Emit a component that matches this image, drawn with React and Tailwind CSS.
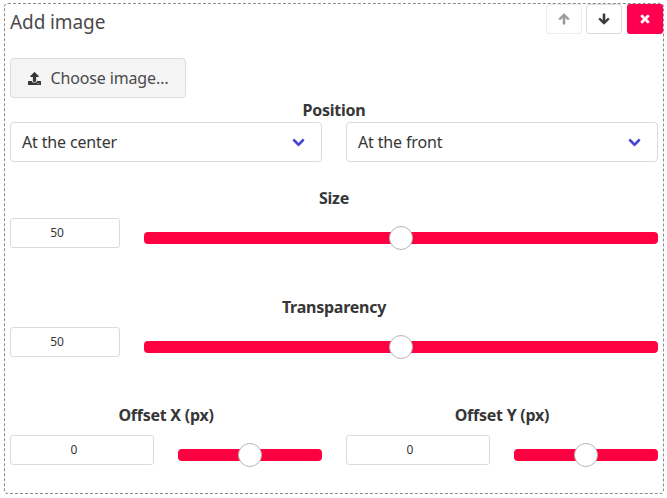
import React from "react";
import { FaArrowDown, FaArrowUp, FaChevronDown, FaTimes, FaUpload } from "react-icons/fa";

const Select = ({ value }) => (
  <div className="flex h-10 flex-1 items-center justify-between rounded-[4px] border border-[#dbdbdb] bg-white pl-[11px] pr-4 text-base tracking-[-0.15px] text-[#363636]">
    <span>{value}</span>
    <FaChevronDown className="text-[13px] text-[#3f3fd8] [stroke-width:30px] stroke-[#3f3fd8]" />
  </div>
);

const Slider = ({ className }) => (
  <div className={`relative h-3 rounded-[4px] bg-[#ff0040] ${className}`}>
    <div className="absolute left-1/2 top-1/2 size-6 -translate-x-1/2 -translate-y-1/2 rounded-full border border-[#b5b5b5] bg-white" />
  </div>
);

const NumberInput = ({ value, className }) => (
  <div className={`flex h-[30px] items-center justify-center rounded-[3px] border border-[#dbdbdb] bg-white pr-4 text-xs text-[#363636] ${className}`}>
    {value}
  </div>
);

const Label = ({ children, className }) => (
  <div className={`text-center text-base font-bold leading-6 tracking-[-0.25px] text-[#363636] ${className}`}>{children}</div>
);

const Offset = ({ label }) => (
  <div className="flex-1">
    <Label className="mb-2">{label}</Label>
    <div className="flex items-center gap-6">
      <NumberInput value="0" className="w-[144px]" />
      <Slider className="mt-[10px] flex-1" />
    </div>
  </div>
);

export default function App() {
  return (
    <div className="h-[498px] w-[667px] bg-white font-['Noto_Sans',sans-serif]">
      <div className="relative left-[4px] top-[3px] h-[491px] w-[660px] rounded-[4px] border border-dashed border-[#8a8a8a] px-[5px]">
        <div className="flex items-start justify-between">
          <h1 className="mt-[4px] text-[19px] leading-7 tracking-[-0.1px] text-[#4a4a4a]">Add image</h1>
          <div className="-mr-[5px] flex gap-1">
            <button className="flex h-[30px] w-9 items-center justify-center rounded-[3px] border border-[#ececec] bg-white text-xs text-[#9a9a9a]">
              <FaArrowUp className="stroke-[#9a9a9a] [stroke-width:30px]" />
            </button>
            <button className="flex h-[30px] w-9 items-center justify-center rounded-[3px] border border-[#dbdbdb] bg-white text-xs text-[#363636]">
              <FaArrowDown className="stroke-[#363636] [stroke-width:30px]" />
            </button>
            <button className="ml-[1px] flex h-[30px] w-9 items-center justify-center rounded-[3px] bg-[#ff0050] text-xs text-white">
              <FaTimes className="stroke-white [stroke-width:30px]" />
            </button>
          </div>
        </div>

        <button className="mt-[22px] flex h-10 w-[176px] items-center justify-center gap-[10px] rounded-[4px] border border-[#dbdbdb] bg-[#f5f5f5] text-base tracking-[-0.15px] text-[#4a4a4a]">
          <FaUpload className="text-[13px] text-[#363636]" />
          Choose image…
        </button>

        <Label>Position</Label>
        <div className="flex gap-6">
          <Select value="At the center" />
          <Select value="At the front" />
        </div>

        <Label className="mt-6">Size</Label>
        <div className="mt-2 flex items-center gap-6">
          <NumberInput value="50" className="w-[110px]" />
          <Slider className="mt-[10px] flex-1" />
        </div>

        <Label className="mt-[47px]">Transparency</Label>
        <div className="mt-2 flex items-center gap-6">
          <NumberInput value="50" className="w-[110px]" />
          <Slider className="mt-[10px] flex-1" />
        </div>

        <div className="mt-[46px] flex gap-6">
          <Offset label="Offset X (px)" />
          <Offset label="Offset Y (px)" />
        </div>
      </div>
    </div>
  );
}
